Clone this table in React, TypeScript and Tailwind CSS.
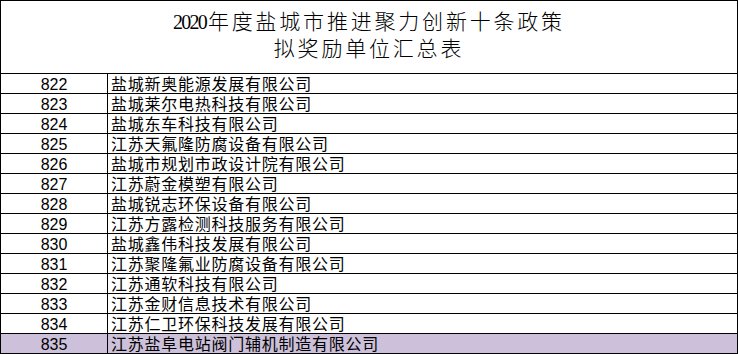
import React from "react"

interface Row {
  no: number
  name: string
  highlight?: boolean
}

const rows: Row[] = [
  { no: 822, name: "盐城新奥能源发展有限公司" },
  { no: 823, name: "盐城莱尔电热科技有限公司" },
  { no: 824, name: "盐城东车科技有限公司" },
  { no: 825, name: "江苏天氟隆防腐设备有限公司" },
  { no: 826, name: "盐城市规划市政设计院有限公司" },
  { no: 827, name: "江苏蔚金模塑有限公司" },
  { no: 828, name: "盐城锐志环保设备有限公司" },
  { no: 829, name: "江苏方露检测科技服务有限公司" },
  { no: 830, name: "盐城鑫伟科技发展有限公司" },
  { no: 831, name: "江苏聚隆氟业防腐设备有限公司" },
  { no: 832, name: "江苏通软科技有限公司" },
  { no: 833, name: "江苏金财信息技术有限公司" },
  { no: 834, name: "江苏仁卫环保科技发展有限公司" },
  { no: 835, name: "江苏盐阜电站阀门辅机制造有限公司", highlight: true },
]

export default function App() {
  return (
    <div className="w-[738px] h-[354px] bg-white text-black">
      <div className="border-l border-r border-t border-black">
        {/* 표 제목 */}
        <div
          className="h-[73px] border-b border-black flex flex-col items-center justify-center pb-[2px] text-[21px] leading-[27px] tracking-[2.8px] font-light"
          style={{ fontFamily: '"Liberation Serif", "Noto Sans CJK SC", serif' }}
        >
          <div>
            <span className="text-[20px] tracking-[-1.8px] mr-[2px] font-normal">2020</span>年度盐城市推进聚力创新十条政策
          </div>
          <div>拟奖励单位汇总表</div>
        </div>

        {rows.map((r) => (
          <div
            key={r.no}
            className={`h-[20px] border-b border-black flex text-[16px] leading-[19px] ${r.highlight ? "bg-[#ccc0da]" : ""}`}
            style={{ fontFamily: '"Liberation Sans", "Noto Sans CJK SC", sans-serif' }}
          >
            <div className="w-[107px] border-r border-black flex items-center justify-center pt-[1px]">
              {r.no}
            </div>
            <div className="flex-1 flex items-center pl-[3px] pt-[1px] tracking-[0.75px]">{r.name}</div>
          </div>
        ))}
      </div>
    </div>
  )
}
